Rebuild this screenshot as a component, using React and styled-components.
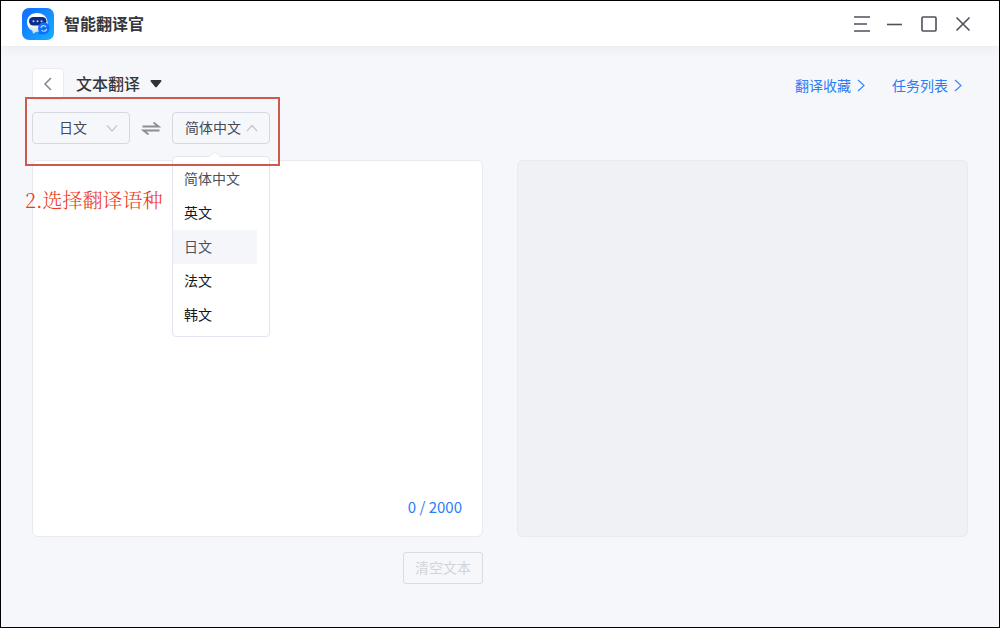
import React, { useState } from 'react';
import styled, { createGlobalStyle } from 'styled-components';

const GlobalStyle = createGlobalStyle`
  * {
    box-sizing: border-box;
  }
  body {
    margin: 0;
    font-family: 'Noto Sans CJK SC', sans-serif;
    font-size: 14px;
    color: #444a52;
  }
  button, select, textarea {
    font: inherit;
    color: inherit;
  }
`;

const Window = styled.div`
  min-height: 100vh;
  display: flex;
  flex-direction: column;
  border: 1px solid #000;
  background: #f6f7fa;
`;
const TitleBar = styled.header`
  height: 45px;
  padding: 0 28px 0 21px;
  display: flex;
  align-items: center;
  background: #fff;
  box-shadow: 0 2px 12px rgba(40, 50, 80, 0.07);
`;
const AppName = styled.h1`
  margin: 0 auto 0 8px;
  padding-bottom: 2px;
  font-size: 16px;
  line-height: 24px;
  font-weight: 700;
  color: #33373d;
`;
const WindowButtons = styled.div`
  display: flex;
  gap: 18px;
`;
const IconButton = styled.button`
  padding: 0;
  border: 0;
  background: none;
  display: flex;
  cursor: pointer;
`;
const Content = styled.main`
  flex: 1;
  padding: 22px 31px 43px;
  display: flex;
  flex-direction: column;
`;
const Toolbar = styled.div`
  display: flex;
  align-items: center;
`;
const BackButton = styled(IconButton)`
  width: 32px;
  height: 32px;
  align-items: center;
  justify-content: center;
  border: 1px solid #e9ebf1;
  border-radius: 4px;
  background: #fff;
`;
const ModeField = styled.div`
  margin: 0 auto 0 12px;
  display: grid;
  align-items: center;

  > * {
    grid-area: 1 / 1;
  }
  svg {
    justify-self: end;
    pointer-events: none;
  }
`;
const ModeSelect = styled.select`
  appearance: none;
  padding: 0 21px 2px 0;
  border: 0;
  background: none;
  font-size: 16px;
  line-height: 24px;
  font-weight: 500;
  color: #33373d;
`;
const ToolbarLinks = styled.nav`
  display: flex;
  gap: 27px;
  padding: 2px 6px 0 0;
`;
const ToolbarLink = styled.a`
  display: flex;
  align-items: center;
  gap: 6px;
  line-height: 20px;
  color: #2a7cf7;
  text-decoration: none;
`;
const Languages = styled.div`
  position: relative;
  z-index: 1;
  align-self: flex-start;
  margin: 12px 0 16px;
  display: flex;
  align-items: center;
  gap: 11px;
`;
const LanguageField = styled.div`
  position: relative;
  width: 98px;
  display: grid;
  align-items: center;

  > select,
  > svg {
    grid-area: 1 / 1;
  }
  > svg {
    justify-self: end;
    margin-right: 12px;
    pointer-events: none;
  }
`;
const LanguageSelect = styled.select`
  appearance: none;
  width: 100%;
  height: 32px;
  padding: 0 22px 2px 6px;
  border: 1px solid #d6d8e2;
  border-radius: 4px;
  background: #f6f7fa;
  text-align: center;
  text-align-last: center;
`;
const Menu = styled.ul`
  position: absolute;
  top: 44px;
  left: 0;
  width: 100%;
  margin: 0;
  padding: 5px 12px 4px 0;
  list-style: none;
  border: 1px solid #e3e5ee;
  border-radius: 4px;
  background: #fff;
`;
const MenuArrow = styled.svg`
  position: absolute;
  top: -6px;
  left: 35px;
`;
const MenuItem = styled.button`
  display: block;
  width: 100%;
  height: 34px;
  padding: 0 0 2px 11px;
  border: 0;
  background: ${(props) => (props.$active ? '#f5f6fa' : 'none')};
  color: ${(props) => (props.$soft ? '#4c5159' : '#16181b')};
  text-align: left;
  white-space: nowrap;
`;
const Highlight = styled.div`
  position: absolute;
  top: -15px;
  right: -10px;
  bottom: -22px;
  left: -7px;
  border: 2px solid #cd5a4e;
  pointer-events: none;
`;
const StepNote = styled.p`
  position: absolute;
  top: 73px;
  left: -7px;
  margin: 0;
  font-family: 'Noto Serif CJK SC', 'Noto Sans CJK SC', serif;
  font-size: 20px;
  line-height: 30px;
  font-weight: 300;
  color: #ee3a20;
  white-space: nowrap;
`;
const Editors = styled.div`
  flex: 1;
  display: grid;
  grid-template: 1fr auto / 1fr 1fr;
  gap: 15px 34px;
`;
const Panel = styled.section`
  min-height: 240px;
  display: flex;
  flex-direction: column;
  border: 1px solid #e8eaef;
  border-radius: 6px;
  background: ${(props) => (props.$muted ? '#f0f1f4' : '#fff')};
`;
const TextArea = styled.textarea`
  flex: 1;
  width: 100%;
  padding: 16px 20px;
  border: 0;
  outline: 0;
  resize: none;
  background: none;
`;
const Counter = styled.div`
  padding: 0 20px 18px;
  font-size: 15px;
  line-height: 22px;
  color: #2a7cf7;
  text-align: right;
`;
const ClearButton = styled.button`
  justify-self: end;
  width: 80px;
  height: 32px;
  padding: 0 0 2px;
  border: 1px solid #d9dbdf;
  border-radius: 3px;
  background: #f6f7fa;
  color: #d2d4d8;
`;

const Logo = () => (
  <svg width='34' height='34' viewBox='0 0 34 34' aria-hidden='true'>
    <defs>
      <linearGradient id='logoBg' x1='0' y1='0' x2='1' y2='1'>
        <stop offset='0' stopColor='#126bff' />
        <stop offset='0.5' stopColor='#158cff' />
        <stop offset='1' stopColor='#12b4ff' />
      </linearGradient>
      <linearGradient id='logoFace' x1='0' y1='0' x2='0' y2='1'>
        <stop offset='0.5' stopColor='#fff' />
        <stop offset='1' stopColor='#cfd8e4' />
      </linearGradient>
    </defs>
    <rect x='0' y='1' width='32' height='32' rx='7' fill='url(#logoBg)' />
    <path
      d='M15 6C8.800 6 5 10 5 15.500c0 4 2.200 6.800 5.300 8.200l.7 3 3.500-2c7 .3 11-4 11-9.200S21.500 6 15 6z'
      fill='url(#logoFace)'
    />
    <rect x='7' y='10' width='17.500' height='8.500' rx='4.200' fill='#0d2c86' />
    <circle cx='11.500' cy='14.200' r='1' fill='#b9d3ff' />
    <circle cx='15.500' cy='14.200' r='1' fill='#b9d3ff' />
    <circle cx='19.500' cy='14.200' r='1' fill='#b9d3ff' />
    <path
      d='M21.700 15.300a6 6 0 1 1-2 11.700l-3.200 .4 .4-3a6 6 0 0 1 4.800-9.100z'
      fill='#0f6ff8'
    />
    <path
      d='M18.900 21a2.800 2.800 0 0 1 5.100-1.200M24.600 21.800a2.800 2.800 0 0 1-5.100 1.200'
      fill='none'
      stroke='#b5dcff'
      strokeWidth='1.200'
    />
  </svg>
);

const WINDOW_ICONS = [
  { name: '菜单', path: 'M1 1h16M1 8h13M1 15h16' },
  { name: '最小化', path: 'M0 8.500h15' },
  { name: '最大化', path: 'M2 1h12a1 1 0 0 1 1 1v12a1 1 0 0 1-1 1H2a1 1 0 0 1-1-1V2a1 1 0 0 1 1-1z' },
  { name: '关闭', path: 'M1.500 1.500l13 13M14.500 1.500l-13 13' },
];

const Stroke = ({ size = 16, w = size, d, color = '#555b63', width = 1.6 }) => (
  <svg
    width={w}
    height={size}
    viewBox={`0 0 ${w} ${size}`}
    fill='none'
    stroke={color}
    strokeWidth={width}
    overflow='visible'
    aria-hidden='true'
  >
    <path d={d} />
  </svg>
);

const LANGUAGES = ['简体中文', '英文', '日文', '法文', '韩文'];

const LanguagePicker = ({ label, value, onChange, open }) => (
  <LanguageField>
    <LanguageSelect
      aria-label={label}
      value={value}
      onChange={(e) => onChange(e.target.value)}
    >
      {LANGUAGES.map((item) => (
        <option key={item}>{item}</option>
      ))}
    </LanguageSelect>
    <Stroke
      size={12}
      d={open ? 'M1 9l5-5.500L11 9' : 'M1 3.500l5 5.500 5-5.500'}
      color='#c3c6ce'
      width={1.2}
    />
    {open && (
      <Menu>
        <MenuArrow width='14' height='7' viewBox='0 0 14 7'>
          <path d='M0 7l7-6 7 6z' fill='#fff' />
          <path d='M1 6l6-5 6 5' fill='none' stroke='#eceef3' />
        </MenuArrow>
        {LANGUAGES.map((item) => (
          <li key={item}>
            <MenuItem
              type='button'
              $active={item === '日文'}
              $soft={item === value || item === '日文'}
              onClick={() => onChange(item)}
            >
              {item}
            </MenuItem>
          </li>
        ))}
      </Menu>
    )}
  </LanguageField>
);

const App = () => {
  const [source, setSource] = useState('日文');
  const [target, setTarget] = useState('简体中文');
  const [text, setText] = useState('');

  const swapLanguages = () => {
    setSource(target);
    setTarget(source);
  };

  return (
    <Window>
      <GlobalStyle />
      <TitleBar>
        <Logo />
        <AppName>智能翻译官</AppName>
        <WindowButtons>
          {WINDOW_ICONS.map((icon) => (
            <IconButton key={icon.name} type='button' aria-label={icon.name}>
              <Stroke d={icon.path} color='#4d5259' />
            </IconButton>
          ))}
        </WindowButtons>
      </TitleBar>
      <Content>
        <Toolbar>
          <BackButton type='button' aria-label='返回'>
            <Stroke d='M11 2L5 8l6 6' color='#868a91' />
          </BackButton>
          <ModeField>
            <ModeSelect aria-label='翻译模式'>
              <option>文本翻译</option>
            </ModeSelect>
            <svg width='12' height='8' viewBox='0 0 12 8' aria-hidden='true'>
              <path
                d='M1.500 0h9c1 0 1.300 1 .7 1.600L7 6.700c-.6.700-1.400.700-2 0L.8 1.600C.2 1 .5 0 1.500 0z'
                fill='#2d3137'
              />
            </svg>
          </ModeField>
          <ToolbarLinks>
            {['翻译收藏', '任务列表'].map((item) => (
              <ToolbarLink key={item} href='#'>
                {item}
                <Stroke size={14} w={8} d='M1 2l6 5.500L1 13' color='#3d88f7' width={1.2} />
              </ToolbarLink>
            ))}
          </ToolbarLinks>
        </Toolbar>
        <Languages>
          <LanguagePicker label='源语言' value={source} onChange={setSource} />
          <IconButton type='button' aria-label='交换语言' onClick={swapLanguages}>
            <svg
              width='20'
              height='14'
              viewBox='0 0 20 14'
              fill='none'
              stroke='#8b8e93'
              strokeWidth='1.800'
            >
              <path d='M1.500 5.500h16L12.500 1.500M18.500 9.500h-16L7.500 13.500' />
            </svg>
          </IconButton>
          <LanguagePicker label='目标语言' value={target} onChange={setTarget} open />
          <Highlight />
          <StepNote>2.选择翻译语种</StepNote>
        </Languages>
        <Editors>
          <Panel>
            <TextArea
              aria-label='原文'
              maxLength={2000}
              value={text}
              onChange={(e) => setText(e.target.value)}
            />
            <Counter>{text.length} / 2000</Counter>
          </Panel>
          <Panel $muted>
            <TextArea aria-label='译文' readOnly />
          </Panel>
          <ClearButton type='button' disabled={!text} onClick={() => setText('')}>
            清空文本
          </ClearButton>
        </Editors>
      </Content>
    </Window>
  );
};

export default App;
